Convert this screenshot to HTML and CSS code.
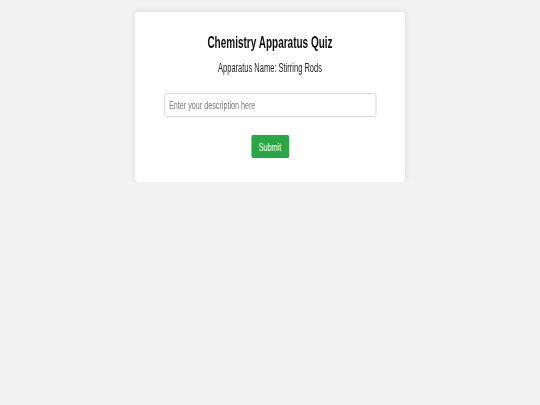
FILE: index.html
```html
<!DOCTYPE html>
<html lang="en">
<head>
<meta charset="utf-8">
<title>Chemistry Apparatus Quiz</title>
<link rel="stylesheet" href="styles.css">
</head>
<body>
<main class="card">
  <h1 class="title">Chemistry Apparatus Quiz</h1>
  <p class="name">Apparatus Name: Stirring Rods</p>
  <form class="quiz">
    <input class="answer" type="text" placeholder="Enter your description here">
    <button class="submit" type="button">Submit</button>
  </form>
</main>
</body>
</html>
```
FILE: styles.css
```css
html, body {
  margin: 0;
  padding: 0;
}
body {
  background: #f2f2f2;
  font-family: "Liberation Sans", Arial, sans-serif;
  color: #111;
  display: flex;
  justify-content: center;
  padding-top: 12px;
}
.card {
  box-sizing: border-box;
  width: 432px;
  flex: none;
  height: 170px;
  background: #fff;
  border-radius: 5px;
  box-shadow: 0 0 10px rgba(0, 0, 0, 0.1);
  padding: 21px 0 0;
  display: flex;
  flex-direction: column;
  align-items: center;
  transform: scaleX(0.625);
}
.title {
  margin: 0;
  font-size: 16px;
  line-height: 20px;
  font-weight: bold;
}
.name {
  margin: 7px 0 0;
  font-size: 12px;
  line-height: 16px;
  color: #222;
}
.quiz {
  margin-top: 17px;
  display: flex;
  flex-direction: column;
  align-items: center;
  width: 100%;
}
.answer {
  box-sizing: border-box;
  width: 339px;
  height: 24px;
  border: 1px solid #d0d0d0;
  border-radius: 3px;
  padding: 0 7px;
  font-family: "Liberation Sans", Arial, sans-serif;
  font-size: 11.5px;
  color: #333;
  background: #fff;
  outline: none;
}
.answer::placeholder {
  color: #777;
}
.submit {
  margin-top: 18px;
  box-sizing: border-box;
  width: 61px;
  height: 23px;
  border: none;
  border-radius: 3px;
  background: #28a745;
  color: #fff;
  font-family: "Liberation Sans", Arial, sans-serif;
  font-size: 11.5px;
  padding: 0;
  cursor: pointer;
}
```
